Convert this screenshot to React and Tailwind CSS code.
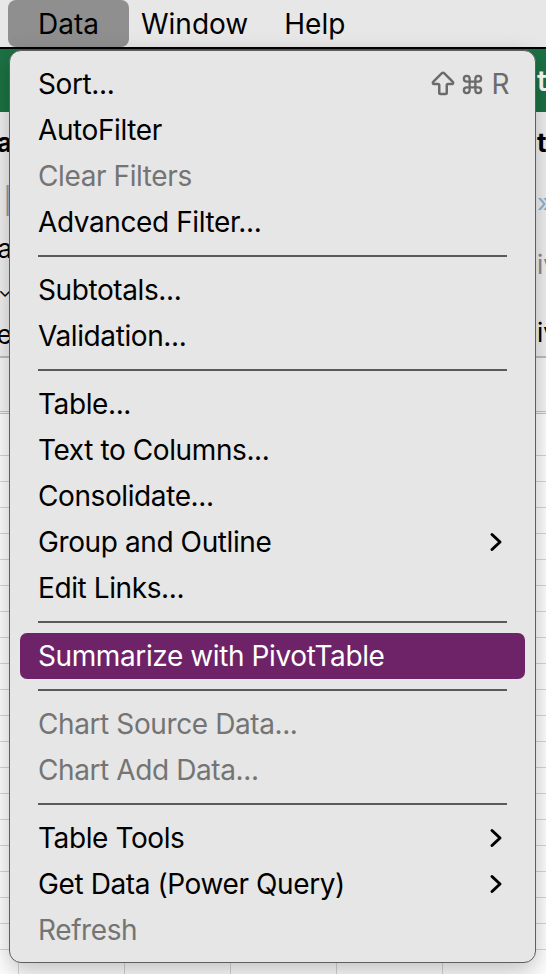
import { ArrowBigUp, Command } from "lucide-react";

const Chevron = () => (
  <svg width="14" height="20" viewBox="0 0 14 20" fill="none">
    <path d="M3 2.5 L11 10 L3 17.5" stroke="#000" strokeWidth="3" strokeLinecap="round" strokeLinejoin="round" />
  </svg>
);

const groups = [
  [
    { label: "Sort...", shortcut: true },
    { label: "AutoFilter" },
    { label: "Clear Filters", disabled: true },
    { label: "Advanced Filter..." },
  ],
  [{ label: "Subtotals..." }, { label: "Validation..." }],
  [
    { label: "Table..." },
    { label: "Text to Columns..." },
    { label: "Consolidate..." },
    { label: "Group and Outline", submenu: true },
    { label: "Edit Links..." },
  ],
  [{ label: "Summarize with PivotTable", active: true }],
  [
    { label: "Chart Source Data...", disabled: true },
    { label: "Chart Add Data...", disabled: true },
  ],
  [
    { label: "Table Tools", submenu: true },
    { label: "Get Data (Power Query)", submenu: true },
    { label: "Refresh", disabled: true },
  ],
];

const MenuItem = ({ item }) => (
  <div
    className={`mx-[10px] flex h-[46px] items-center justify-between rounded-[7px] pl-[18px] pr-[16px] text-[28px] tracking-[-0.4px] ${
      item.active ? "bg-[#6e2368] text-white" : item.disabled ? "text-[#747474]" : "text-black"
    }`}
  >
    <span>{item.label}</span>
    {item.shortcut && (
      <span className="flex items-center gap-[3px] text-[#6b6b6b]">
        <ArrowBigUp size={30} strokeWidth={2} />
        <Command size={23} strokeWidth={2.4} />
        <span className="ml-[4px]">R</span>
      </span>
    )}
    {item.submenu && (
      <span className="pr-[6px]">
        <Chevron />
      </span>
    )}
  </div>
);

const Separator = () => (
  <div className="flex h-[22px] items-center px-[28px]">
    <div className="h-[2px] w-full bg-[#5a5a5a]" />
  </div>
);

const rows = Array.from({ length: 20 });

export default function App() {
  return (
    <div className="relative h-[974px] w-[546px] overflow-hidden bg-white font-['Inter',sans-serif]">
      {/* menu bar */}
      <div className="flex h-[47px] items-center bg-[#e7e7e7] text-[28px] text-black">
        <div className="ml-[8px] flex h-[47px] w-[121px] items-center rounded-[8px] bg-[#8f8f8f] pl-[30px]">Data</div>
        <span className="ml-[12px]">Window</span>
        <span className="ml-[36px]">Help</span>
      </div>
      <div className="h-[2px] bg-black" />

      {/* green title strip */}
      <div className="flex h-[63px] items-center justify-end overflow-hidden bg-[#1c7244] text-[28px] font-semibold text-white">
        <span className="w-[12px] pl-[3px]">t</span>
      </div>

      {/* ribbon */}
      <div className="flex h-[246px] justify-between overflow-hidden border-b-2 border-[#bdbdbd] bg-[#f0f0f0] text-[26px]">
        <div className="flex w-[12px] flex-col items-end overflow-visible pt-[14px] leading-[34px]">
          <span className="font-bold">la</span>
          <span className="mt-[24px] text-[#9a9a9a]">|</span>
          <span className="mt-[14px]">Ta</span>
          <span className="mt-[8px] text-[18px]">⌄</span>
          <span className="mt-[10px]">e</span>
        </div>
        <div className="flex w-[12px] flex-col items-start pl-[3px] pt-[14px] leading-[34px]">
          <span className="font-bold">te</span>
          <span className="mt-[26px] text-[#8fb3d6]">»</span>
          <span className="mt-[28px] text-[#8a8a8a]">iv</span>
          <span className="mt-[34px]">iv</span>
        </div>
      </div>
      <div className="h-[56px] border-b-[3px] border-double border-[#c4c4c4] bg-[#f7f7f7]" />
      <div className="h-[42px] border-b border-[#d4d4d4]" />

      {/* grid */}
      {rows.map((_, i) => (
        <div key={i} className="flex h-[26px] border-b border-[#d6d6d6]">
          <div className="w-[19px] border-r border-[#d6d6d6]" />
          <div className="w-[106px] border-r border-[#d6d6d6]" />
          <div className="w-[106px] border-r border-[#d6d6d6]" />
          <div className="w-[106px] border-r border-[#d6d6d6]" />
          <div className="w-[106px] border-r border-[#d6d6d6]" />
        </div>
      ))}

      {/* data menu */}
      <div className="absolute left-[9px] top-[50px] w-[527px] rounded-[12px] border border-[#5e5e5e] bg-[#e6e6e6] pb-[9px] pt-[10px] shadow-[0_8px_24px_rgba(0,0,0,0.25)]">
        {groups.map((group, gi) => (
          <div key={gi}>
            {gi > 0 && <Separator />}
            {group.map((item) => (
              <MenuItem key={item.label} item={item} />
            ))}
          </div>
        ))}
      </div>
    </div>
  );
}
